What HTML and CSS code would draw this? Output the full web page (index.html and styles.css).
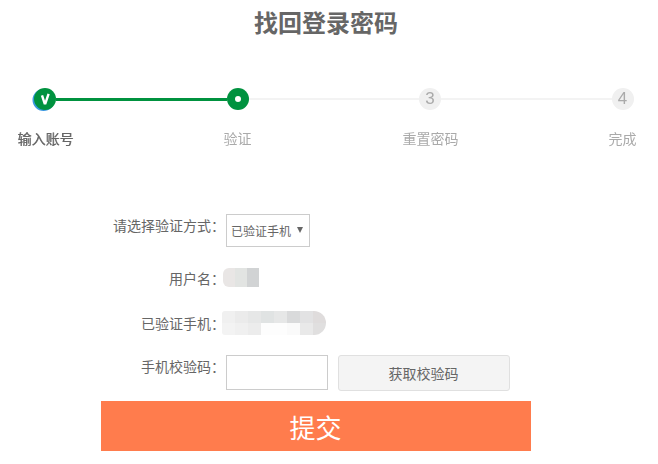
FILE: index.html
```html
<!DOCTYPE html>
<html>
<head>
  <meta charset="utf-8">
  <title>找回登录密码</title>
  <link rel="stylesheet" href="styles.css">
</head>
<body>
  <h1>找回登录密码</h1>
  <div class="steps">
    <div class="track">
      <span class="dot done">
        <svg width="12" height="14" viewBox="0 0 12 14"><path d="M3 3.4 L5.6 11.4 L6.4 11.4 L9.6 1.8" fill="none" stroke="#fff" stroke-width="2.4"/></svg>
      </span>
      <span class="line on"></span>
      <span class="dot current"><i></i></span>
      <span class="line"></span>
      <span class="dot">3</span>
      <span class="line"></span>
      <span class="dot">4</span>
    </div>
    <div class="labels">
      <span class="active">输入账号</span>
      <span>验证</span>
      <span class="third">重置密码</span>
      <span>完成</span>
    </div>
  </div>
  <form class="form">
    <div class="row row-select">
      <label>请选择验证方式：</label>
      <span class="select-wrap">
        <select><option>已验证手机</option></select>
      </span>
    </div>
    <div class="row">
      <label>用户名：</label>
      <div class="mosaic name">
        <i style="background:#e9e6e5"></i><i style="background:#e2e4e2"></i><i style="background:#d1d3d4"></i>
      </div>
    </div>
    <div class="row row-phone">
      <label>已验证手机：</label>
      <div class="mosaic phone">
        <i style="background:#f0f0f0"></i><i style="background:#ebebeb"></i><i style="background:#e6e7e7"></i><i style="background:#e0e3e3"></i><i style="background:#e6e7e7"></i><i style="background:#d9dadb"></i><i style="background:#e2e2e3"></i><i style="background:#dfdcdc"></i>
        <i style="background:#f3f3f3"></i><i style="background:#f0f0f0"></i><i style="background:#ececec"></i><i style="background:#fdfdfd"></i><i style="background:#fdfdfd"></i><i style="background:#fafafa"></i><i style="background:#e9e9e9"></i><i style="background:#e0dfdf"></i>
      </div>
    </div>
    <div class="row row-code">
      <label>手机校验码：</label>
      <input type="text">
      <button type="button" class="get-code">获取校验码</button>
    </div>
    <button type="button" class="submit">提交</button>
  </form>
</body>
</html>
```

FILE: styles.css
```css
body {
  margin: 0;
  font-family: "Liberation Sans", "Noto Sans CJK SC", sans-serif;
  color: #666;
  background: #fff;
}

h1 {
  margin: 0;
  padding-top: 8px;
  width: 652px;
  font-size: 24px;
  line-height: 32px;
  font-weight: bold;
  text-align: center;
  color: #666;
}

.steps {
  margin-top: 48px;
  filter: blur(.5px);
}

.track {
  display: flex;
  align-items: center;
  padding-left: 34px;
}

.dot {
  flex: none;
  display: flex;
  align-items: center;
  justify-content: center;
  width: 22px;
  height: 22px;
  border-radius: 50%;
  background: #f0f0f0;
  color: #aaa;
  font-size: 17px;
}

.dot.done, .dot.current {
  background: #00923f;
}

.dot.done {
  box-shadow: -1.5px 1px 0 #3a97e0;
}

.dot.current i {
  width: 6px;
  height: 6px;
  border-radius: 50%;
  background: #fff;
}

.line {
  flex: none;
  width: 170.5px;
  height: 2px;
  background: #f3f3f3;
}

.line.on {
  height: 3px;
  background: #00923f;
}

.labels {
  display: flex;
  gap: 136.1px;
  margin-top: 19px;
  padding-left: 17.5px;
}

.labels span {
  flex: none;
  width: 56px;
  font-size: 14px;
  line-height: 20px;
  text-align: center;
  color: #aaa;
  white-space: nowrap;
}

.labels .third {
  margin-left: .8px;
}

.labels .active {
  color: #666;
  text-shadow: .5px 0 0 #888;
}

.form {
  margin-top: 65px;
}

.row {
  display: flex;
  align-items: flex-start;
  margin-bottom: 18px;
  height: 26px;
}

.row label {
  flex: none;
  box-sizing: border-box;
  width: 226px;
  padding-right: 1px;
  font-size: 14px;
  line-height: 26px;
  text-align: right;
  color: #666;
}

.row-select {
  height: 33px;
  margin-bottom: 19px;
}

.row-select label {
  margin-top: -1px;
}

.row-phone label {
  padding-top: 1px;
}

.select-wrap {
  position: relative;
  display: block;
  width: 84px;
  height: 33px;
}

.select-wrap::after {
  content: "";
  position: absolute;
  left: 71px;
  top: 13px;
  border-left: 3px solid transparent;
  border-right: 3px solid transparent;
  border-top: 6px solid #666;
}

select {
  appearance: none;
  box-sizing: border-box;
  display: block;
  width: 84px;
  height: 33px;
  margin: 0;
  padding: 2px 0 0 4px;
  border: 1px solid #ccc;
  border-radius: 0;
  background: #fff;
  font-family: inherit;
  font-size: 12px;
  color: #666;
}

.mosaic {
  display: grid;
  overflow: hidden;
}

.mosaic i {
  display: block;
}

.name {
  grid-template-columns: repeat(3, 12px);
  grid-auto-rows: 19px;
  margin: 2px 0 0 -3px;
  border-radius: 6px 0 0 6px;
}

.phone {
  grid-template-columns: repeat(8, 13px);
  grid-auto-rows: 12px;
  margin: 1px 0 0 -4px;
  border-radius: 3px 12px 12px 3px;
}

.row-code {
  height: 37px;
  margin-bottom: 10px;
}

.row-code input {
  box-sizing: border-box;
  width: 102px;
  height: 35px;
  margin: 1px 0 0;
  padding: 0 4px;
  border: 1px solid #ccc;
  border-radius: 0;
  outline: none;
}

.get-code {
  box-sizing: border-box;
  width: 172px;
  height: 36px;
  margin: 1px 0 0 10px;
  padding: 0 7px 0 6px;
  border: 1px solid #e0e0e0;
  border-radius: 3px;
  background: #f4f4f4;
  font-family: inherit;
  font-size: 14px;
  color: #666;
}

.submit {
  display: block;
  width: 430px;
  height: 50px;
  margin-left: 101px;
  padding: 0 1px 0 0;
  border: 0;
  background: #ff7c4d;
  font-family: inherit;
  font-size: 26px;
  color: #fff;
}
```
